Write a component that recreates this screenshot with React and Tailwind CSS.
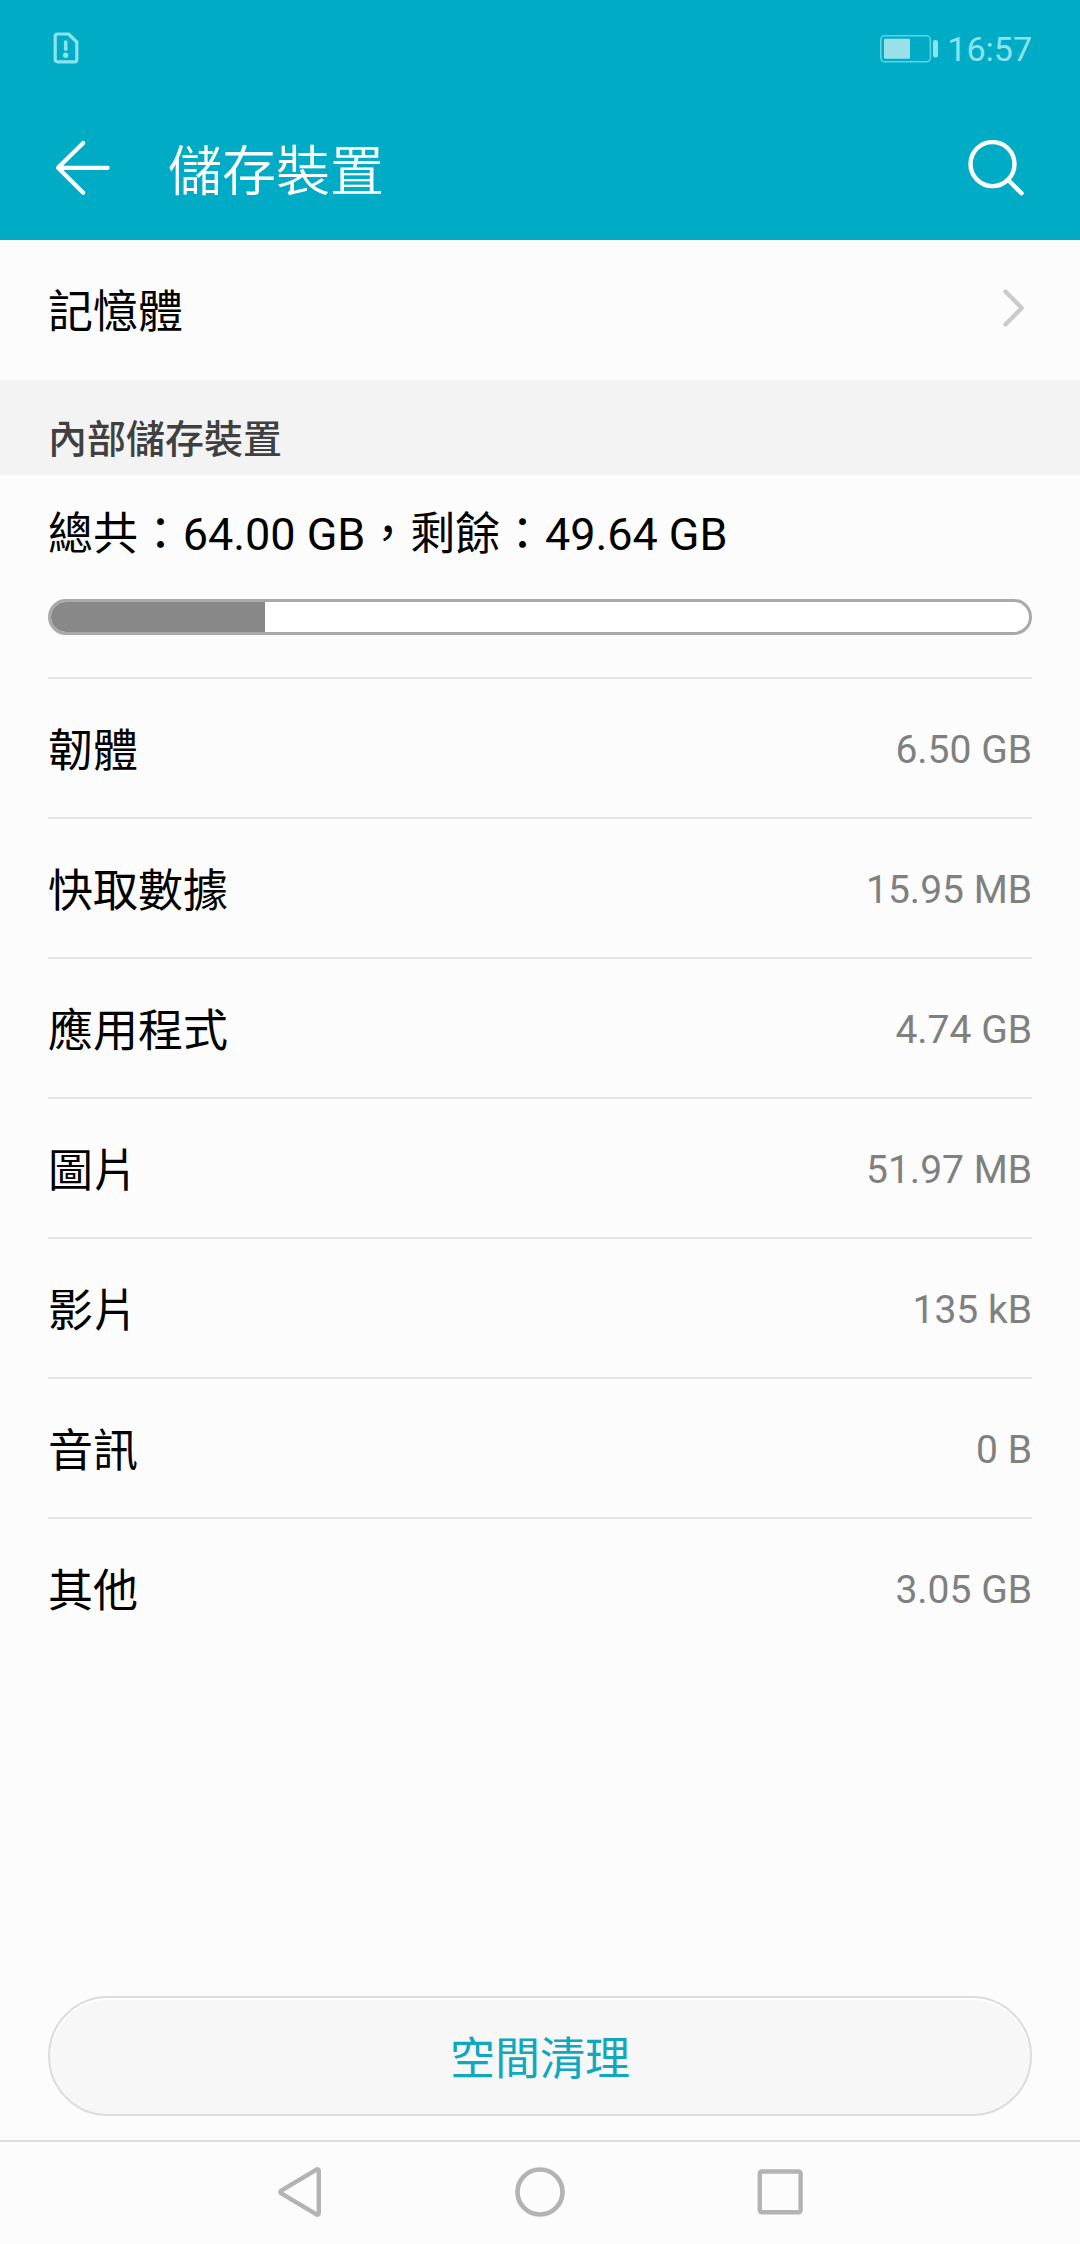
const rows = [
  ['韌體', '6.50 GB'],
  ['快取數據', '15.95 MB'],
  ['應用程式', '4.74 GB'],
  ['圖片', '51.97 MB'],
  ['影片', '135 kB'],
  ['音訊', '0 B'],
  ['其他', '3.05 GB'],
];

function StatusBar() {
  return (
    <div className="flex h-24 items-center justify-between pl-[53px] pr-12 text-[#8ce3ed]">
      <svg className="-mt-px h-8 w-[26px]" viewBox="0 0 26 32" fill="none" stroke="currentColor">
        <path d="M4.5 2H15.5L23.8 10V27.5Q23.8 29.8 21.5 29.8H4.5Q2.2 29.8 2.2 27.5V4.3Q2.2 2 4.5 2Z" strokeWidth="3.2" strokeLinejoin="round" />
        <path d="M12.7 10V17.2" strokeWidth="3.6" strokeLinecap="round" />
        <circle cx="12.7" cy="23.3" r="2.7" fill="currentColor" stroke="none" />
      </svg>
      <div className="flex items-center">
        <svg className="mt-px h-7 w-[58px]" viewBox="0 0 58 28" fill="none">
          <rect x="0.8" y="0.8" width="49.6" height="26" rx="4" stroke="#5cd3e0" strokeWidth="1.6" />
          <rect x="4" y="3.8" width="26" height="20" rx="1" fill="#9be0e9" />
          <rect x="53" y="5" width="5" height="17.5" rx="2.2" fill="#8ce3ed" />
        </svg>
        <span className="ml-[9px] mt-0.5 text-[34px] leading-[44px]">16:57</span>
      </div>
    </div>
  );
}

function TitleBar() {
  return (
    <div className="flex h-36 items-center pl-[55px] pr-14 text-white">
      <svg className="h-14 w-14" viewBox="0 0 56 56" fill="none" stroke="currentColor" strokeWidth="4.2" strokeLinecap="round" strokeLinejoin="round">
        <path d="M28.2 3L3 27.8L28.2 52.7M4 27.8H52.7" />
      </svg>
      <h1 className="ml-[57px] mt-[9px] grow text-[54px] font-[350] leading-[64px]">儲存裝置</h1>
      <svg className="h-14 w-14" viewBox="0 0 56 56" fill="none" stroke="currentColor" strokeWidth="4.4" strokeLinecap="round">
        <circle cx="24.5" cy="24.1" r="22" />
        <path d="M40.7 40.5L53.5 53.3" />
      </svg>
    </div>
  );
}

function NavBar() {
  return (
    <nav className="flex h-[104px] items-center justify-center gap-48 border-t-2 border-[#dedede] pb-0.5 text-[#b3b3b3]">
      <svg className="h-[50px] w-12" viewBox="0 0 48 50" fill="none" stroke="currentColor" strokeWidth="4.4" strokeLinejoin="round">
        <path d="M43.8 4V46Q43.8 48.6 41 47.2L6.3 26.4Q4.2 25 6.3 23.6L41 2.8Q43.8 1.4 43.8 4Z" />
      </svg>
      <svg className="h-[50px] w-[50px]" viewBox="0 0 50 50" fill="none" stroke="currentColor" strokeWidth="4.6">
        <circle cx="25" cy="25" r="22.5" />
      </svg>
      <svg className="h-12 w-12" viewBox="0 0 48 48" fill="none" stroke="currentColor" strokeWidth="4.4">
        <rect x="2.8" y="3.5" width="40.8" height="40.8" rx="2" />
      </svg>
    </nav>
  );
}

export default function App() {
  return (
    <div className="flex h-[2244px] w-[1080px] flex-col bg-[#fcfcfc] font-['Roboto','Noto_Sans_CJK_TC',sans-serif] text-[45px] text-black">
      <header className="h-60 bg-[#00acc5]">
        <StatusBar />
        <TitleBar />
      </header>

      <div className="flex h-[140px] items-center justify-between pl-12 pr-[54px]">
        <span className="mt-1.5 leading-[60px]">記憶體</span>
        <svg className="-mt-1 h-10 w-6" viewBox="0 0 24 40" fill="none" stroke="#cbcbcb" strokeWidth="4.4" strokeLinecap="round" strokeLinejoin="round">
          <path d="M3.5 3.5L19.7 20L3.5 36.5" />
        </svg>
      </div>

      <h2 className="h-[95px] bg-[#f3f3f3] px-12 pt-[35px] text-[39px] font-medium leading-[50px] text-[#404040]">
        內部儲存裝置
      </h2>

      <main className="flex grow flex-col px-12">
        <p className="pt-[30px] leading-[60px] tracking-[-0.06px]">總共：64.00 GB，剩餘：49.64 GB</p>
        <div className="mt-[34px] h-9 overflow-hidden rounded-full border-[3px] border-[#a9a9a9] bg-white">
          <div className="h-full w-[214px] bg-[#888888]" />
        </div>
        <ul className="mt-[42px]">
          {rows.map(([label, size]) => (
            <li key={label} className="flex h-[140px] items-center justify-between border-t-2 border-[#e5e5e5]">
              <span className="mt-[7px] leading-[60px]">{label}</span>
              <span className="mt-[3px] text-[39px] leading-[60px] text-[#808080]">{size}</span>
            </li>
          ))}
        </ul>
        <button className="mb-6 mt-auto h-[120px] rounded-full border-2 border-[#dcdcdc] bg-[#f7f7f7] pt-[7px] text-[45px] leading-[60px] text-[#11a8be] shadow-[inset_0_2px_1px_#ffffff]">
          空間清理
        </button>
      </main>

      <NavBar />
    </div>
  );
}
